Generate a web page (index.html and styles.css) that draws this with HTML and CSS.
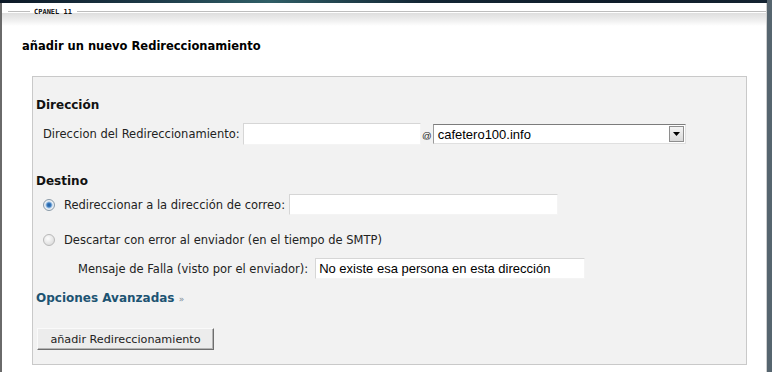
FILE: index.html
```html
<!DOCTYPE html>
<html lang="es">
<head>
    <meta charset="UTF-8">
    <title>añadir un nuevo Redireccionamiento</title>
    <link rel="stylesheet" href="styles.css">
</head>
<body>
    <div class="topbar"></div>
    <div class="page">
        <!-- brand line -->
        <div class="brand">
            <span class="brand-line short"></span>
            <span class="brand-name">CPANEL 11</span>
            <span class="brand-line"></span>
        </div>

        <h1 class="title">añadir un nuevo Redireccionamiento</h1>

        <form class="box">
            <h3 class="section">Dirección</h3>
            <div class="row addr-row">
                <label for="email">Direccion del Redireccionamiento:</label>
                <input type="text" id="email" class="field field-email">
                <span class="at">@</span>
                <div class="select">
                    <span class="select-value">cafetero100.info</span>
                    <span class="select-btn">
                        <svg width="7" height="4" viewBox="0 0 7 4"><path d="M0 0h7L3.5 4z" fill="#000"/></svg>
                    </span>
                </div>
            </div>

            <h3 class="section destino">Destino</h3>
            <div class="row radio-row first">
                <input type="radio" name="fwd" id="fwd" class="radio" checked>
                <label for="fwd">Redireccionar a la dirección de correo:</label>
                <input type="text" class="field field-fwd">
            </div>
            <div class="row radio-row second">
                <input type="radio" name="fwd" id="fail" class="radio">
                <label for="fail">Descartar con error al enviador (en el tiempo de SMTP)</label>
            </div>
            <div class="row msg-row">
                <label for="failmsg">Mensaje de Falla (visto por el enviador):</label>
                <input type="text" id="failmsg" class="field field-msg" value="No existe esa persona en esta dirección">
            </div>

            <a href="#" class="advanced">Opciones Avanzadas <span class="raquo">»</span></a>

            <div class="actions">
                <button type="button" class="btn">añadir Redireccionamiento</button>
            </div>
        </form>
    </div>
</body>
</html>
```

FILE: styles.css
```css
* {
    margin: 0;
    padding: 0;
    box-sizing: border-box;
}

body {
    font-family: "DejaVu Sans", Verdana, sans-serif;
    font-size: 11.5px;
    color: #222;
    background-color: #56656f;
    height: 372px;
    overflow: hidden;
    display: flex;
    flex-direction: column;
}

/* dark strip on top */
.topbar {
    height: 3px;
    margin-right: 5px;
    background: linear-gradient(90deg, #0c1826 0%, #1d3a48 20%, #2f5e66 35%, #132634 55%, #0f1d2a 80%, #142331 100%);
}

.page {
    flex: 1;
    margin-right: 5px;
    background-color: #fff;
    border-left: 2px solid #6a6a6a;
    border-right: 1px solid #cfcfcf;
    padding-top: 7px;
}

/* brand line */
.brand {
    display: flex;
    align-items: center;
    height: 3px;
    margin-left: 6px;
}

.brand-line {
    flex: 1;
    height: 1px;
    background-color: #bdbdbd;
}

.brand-line.short {
    flex: 0 0 22px;
}

.brand-name {
    font-family: "DejaVu Sans Mono", monospace;
    font-size: 7px;
    font-weight: bold;
    color: #111;
    padding: 0 5px 0 4px;
}

.title {
    font-size: 11.5px;
    font-weight: bold;
    color: #000;
    padding: 25px 0 0 20px;
    height: 63px;
    line-height: 16px;
    background: linear-gradient(#dedede 0px, #eeeeee 7px, #fff 13px, #fff 100%);
    background-size: 100% 13px;
    background-repeat: no-repeat;
}

/* gray form box */
.box {
    margin: 0 19px 0 30px;
    background-color: #f2f2f2;
    border: 1px solid #c9c9c9;
    padding: 21px 0 14px 3px;
    display: flex;
    flex-direction: column;
    align-items: flex-start;
}

.section {
    font-size: 12px;
    font-weight: bold;
    color: #111;
    line-height: 14px;
}

.section.destino {
    margin-top: 29px;
}

.row {
    display: flex;
    align-items: center;
    height: 21px;
    white-space: nowrap;
}

.addr-row {
    margin-top: 11px;
    height: 22px;
    padding-left: 7px;
}

.addr-row label {
    width: 200px;
}

.field {
    height: 21px;
    background-color: #fff;
    border: 1px solid;
    border-color: #d6d6d6 #f4f4f4 #f4f4f4 #d6d6d6;
    font-family: "Liberation Sans", Arial, sans-serif;
    font-size: 13px;
    color: #000;
    padding: 0 3px;
    outline: none;
}

.field-email {
    width: 178px;
    height: 22px;
}

.at {
    font-family: "Liberation Sans", Arial, sans-serif;
    font-size: 9.5px;
    padding: 0 1px 0 1px;
    margin-top: 2px;
}

.select {
    width: 253px;
    height: 20px;
    display: flex;
    align-items: center;
    background-color: #fff;
    border-top: 1px solid #7c7c7c;
    border-left: 1px solid #9a9a9a;
    border-right: 1px solid #e0e0e0;
    border-bottom: 1px solid #e0e0e0;
}

.select-value {
    flex: 1;
    font-family: "Liberation Sans", Arial, sans-serif;
    font-size: 13px;
    color: #000;
    padding-left: 4px;
}

.select-btn {
    width: 15px;
    height: 16px;
    margin-right: 1px;
    display: flex;
    align-items: center;
    justify-content: center;
    background: linear-gradient(#f4f4f4, #d9d9d9);
    border: 1px solid #8e8e8e;
}

/* radio rows */
.radio-row {
    padding-left: 7px;
}

.radio-row.first {
    margin-top: 6px;
}

.radio-row.second {
    margin-top: 14px;
}

.radio {
    appearance: none;
    width: 12px;
    height: 12px;
    border-radius: 50%;
    border: 1px solid #b8b8b8;
    background: radial-gradient(circle at 40% 35%, #fdfdfd, #dcdcdc 80%);
    margin: 0 9px 0 0;
}

.radio:checked {
    border-color: #8a9aa8;
    background: radial-gradient(circle, #1d5a9a 0, #3c7cc0 2px, #9cc0e4 3px, #eef2f6 4px, #d8dde2 100%);
}

.field-fwd {
    width: 269px;
    margin-left: 4px;
}

.msg-row {
    margin-top: 8px;
    padding-left: 42px;
}

.field-msg {
    width: 270px;
    margin-left: 7px;
}

.advanced {
    margin-top: 12px;
    line-height: 14px;
    font-size: 12px;
    font-weight: bold;
    color: #1d5472;
    text-decoration: none;
}

.raquo {
    color: #7a8c99;
    font-weight: normal;
    font-size: 9px;
}

.actions {
    margin-top: 22px;
}

.btn {
    height: 22px;
    width: 177px;
    margin-left: 1px;
    font-family: "DejaVu Sans", Verdana, sans-serif;
    font-size: 11.2px;
    color: #222;
    background-color: #ececec;
    border: 1px solid;
    border-color: #fafafa #6e6e6e #6e6e6e #fafafa;
    box-shadow: inset -1px -1px 0 #b4b4b4;
}
```
